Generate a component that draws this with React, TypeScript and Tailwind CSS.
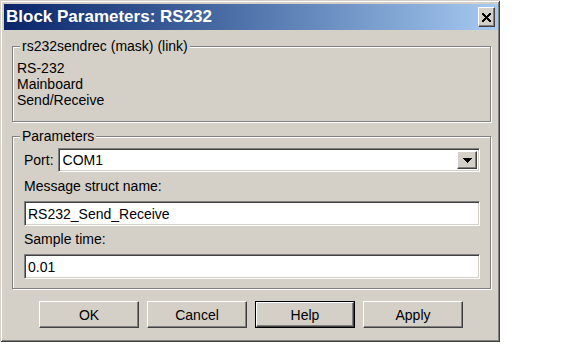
import React from "react";

const raised =
  "border border-t-white border-l-white border-r-[#404040] border-b-[#404040] shadow-[inset_-1px_-1px_0_#808080]";
const sunken =
  "border border-t-[#808080] border-l-[#808080] border-r-white border-b-white shadow-[inset_1px_1px_0_#404040,inset_-1px_-1px_0_#d4d0c8]";
const etched =
  "border border-[#808080] shadow-[inset_1px_1px_0_#fff,1px_1px_0_#fff]";

function CloseGlyph() {
  const rows = [
    "XX.....XX",
    "XXX...XXX",
    ".XXX.XXX.",
    "..XXXXX..",
    "...XXX...",
    "..XXXXX..",
    ".XXX.XXX.",
    "XXX...XXX",
    "XX.....XX",
  ];
  return (
    <svg width="9" height="9" viewBox="0 0 9 9" shapeRendering="crispEdges">
      {rows.flatMap((r, y) =>
        r.split("").map((c, x) =>
          c === "X" ? <rect key={`${x}-${y}`} x={x} y={y} width="1" height="1" fill="#000" /> : null
        )
      )}
    </svg>
  );
}

function DownArrow() {
  return (
    <svg width="9" height="5" viewBox="0 0 9 5" shapeRendering="crispEdges">
      <rect x="0" y="0" width="9" height="1" fill="#000" />
      <rect x="1" y="1" width="7" height="1" fill="#000" />
      <rect x="2" y="2" width="5" height="1" fill="#000" />
      <rect x="3" y="3" width="3" height="1" fill="#000" />
      <rect x="4" y="4" width="1" height="1" fill="#000" />
    </svg>
  );
}

function Button({ label, isDefault }: { label: string; isDefault?: boolean }) {
  if (isDefault) {
    return (
      <div className="w-[100px] h-[27px] border border-black flex">
        <div className={`flex-1 flex items-center justify-center ${raised}`}>
          <span>{label}</span>
        </div>
      </div>
    );
  }
  return (
    <div className={`w-[100px] h-[27px] flex items-center justify-center ${raised}`}>
      <span>{label}</span>
    </div>
  );
}

export default function App() {
  return (
    <div className="w-[580px] h-[345px] bg-white font-['Liberation_Sans',Arial,sans-serif] text-[14px] text-black leading-[16px]">
      <div className="w-[500px] h-[342px] bg-[#d4d0c8] pt-[4px] pl-[4px] pr-[2px] flex flex-col shadow-[inset_1px_1px_0_#d4d0c8,inset_-1px_-1px_0_#404040,inset_2px_2px_0_#fff,inset_-2px_-2px_0_#808080]">
        {/* Title bar */}
        <div className="h-[26px] bg-linear-to-r from-[#0a246a] to-[#a6caf0] flex items-center justify-between pl-[2px] pr-[3px]">
          <span className="text-white font-bold text-[17px] leading-[20px]">Block Parameters: RS232</span>
          <div className={`w-[17px] h-[20px] bg-[#d4d0c8] flex items-center justify-center ${raised}`}>
            <CloseGlyph />
          </div>
        </div>

        {/* Mask group */}
        <div className={`ml-[8px] mr-[7px] mt-[16px] pl-[4px] pb-[13px] flex flex-col ${etched}`}>
          <span className="-mt-[9px] ml-[3px] px-[2px] bg-[#d4d0c8] self-start">rs232sendrec (mask) (link)</span>
          <div className="mt-[6px] flex flex-col">
            <span>RS-232</span>
            <span>Mainboard</span>
            <span>Send/Receive</span>
          </div>
        </div>

        {/* Parameters group */}
        <div className={`ml-[8px] mr-[7px] mt-[14px] pl-[11px] pr-[10px] pb-[9px] flex flex-col ${etched}`}>
          <span className="-mt-[9px] -ml-[4px] px-[2px] bg-[#d4d0c8] self-start">Parameters</span>
          <div className="mt-[4px] flex items-center gap-[4px]">
            <span>Port:</span>
            <div className={`flex-1 h-[24px] bg-white flex items-center p-[2px] ${sunken}`}>
              <span className="flex-1 pl-[2px]">COM1</span>
              <div className={`w-[20px] h-full bg-[#d4d0c8] flex items-center justify-center ${raised}`}>
                <DownArrow />
              </div>
            </div>
          </div>
          <span className="mt-[6px]">Message struct name:</span>
          <div className={`mt-[7px] h-[25px] bg-white flex items-center pl-[3px] ${sunken}`}>
            <span>RS232_Send_Receive</span>
          </div>
          <span className="mt-[5px]">Sample time:</span>
          <div className={`mt-[7px] h-[25px] bg-white flex items-center pl-[3px] ${sunken}`}>
            <span>0.01</span>
          </div>
        </div>

        {/* Buttons */}
        <div className="mt-[12px] flex justify-center gap-[8px]">
          <Button label="OK" />
          <Button label="Cancel" />
          <Button label="Help" isDefault />
          <Button label="Apply" />
        </div>
      </div>
    </div>
  );
}
